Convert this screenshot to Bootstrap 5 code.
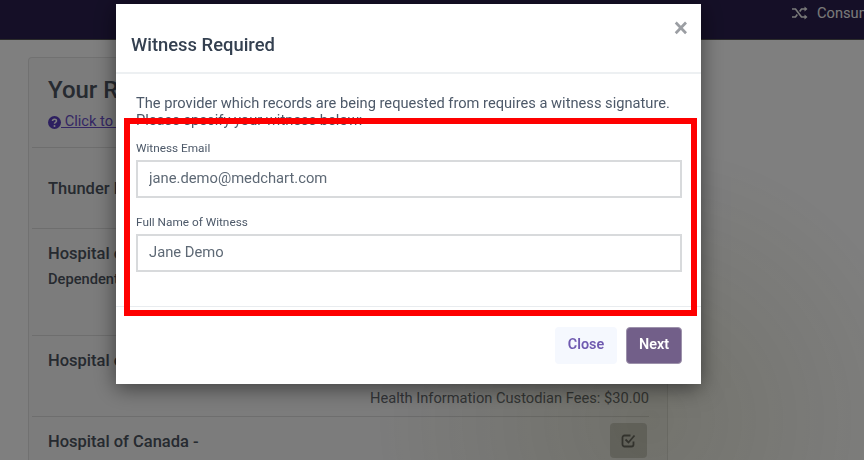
<!DOCTYPE html>
<html lang="en">
<head>
<meta charset="utf-8">
<title>Witness Required</title>
<link href="https://cdn.jsdelivr.net/npm/bootstrap@5.3.0/dist/css/bootstrap.min.css" rel="stylesheet">
<style>
html,body{height:460px;overflow:hidden}
body{font-family:Roboto,"Liberation Sans",sans-serif;background:#fff;color:#344050}
.topbar{height:40px;background:#2a1f4e;border-bottom:1px solid #555;color:#f4f4f4;font-size:14.67px;justify-content:flex-end;padding-bottom:13px}
.topbar-item{width:72px;white-space:nowrap;overflow:hidden;flex:none;gap:9px}
.topbar-item svg{flex:none}
.page-wrap{padding:17px 196px 0 28px;height:420px;overflow:hidden}
.rec-card{border:1px solid #e3e3e3;border-bottom:0;border-radius:4px 4px 0 0;padding:0 18px 0 3px;height:403px;background:#f8f8f8}
.rec-head{padding:18px 16px 0;height:90px;border-bottom:1px solid #dcdcdc;color:#4c5460}
.rec-head h2{font-size:24px;font-weight:500;margin:0 0 5px;line-height:28px}
.help-link{font-size:14.67px;color:#6a4fc8}
.rec-row{padding:0 16px;border-bottom:1px solid #dcdcdc;font-weight:500;font-size:16.5px;position:relative;color:#4c5460}
.r1{height:81px;padding-top:31px;line-height:20px}
.r2{height:107px;padding-top:13px}
.r2 div+div{font-size:14.67px;margin-top:1px}
.r3{height:81px;padding-top:13px}
.r4{padding-top:13px;border:0;height:50px}
.fee{font-weight:400;font-size:14.67px;text-align:right;margin-top:13px;margin-right:-16px;color:#666a70}
.chk-btn{position:absolute;right:2px;top:6px;width:37px;height:35px;background:#d0d0cc;border-radius:4px;display:flex;align-items:center;justify-content:center}
.modal-backdrop.show{opacity:.5;background:#000}
.glow{position:fixed;inset:0;z-index:1040;background:radial-gradient(circle at 650px 420px,rgba(110,110,30,.16),rgba(110,110,30,0) 280px);pointer-events:none}
.wit-dialog{max-width:585px;width:585px;margin:4px 0 0 116px}
.wit-content{border:0;border-radius:0;box-shadow:0 4px 20px rgba(0,0,0,.5);height:380px;color:#344050}
.wit-header{height:70px;padding:0 15px;border-bottom:2px solid #edf0f2;border-radius:0}
.wit-title{font-size:18.4px;font-weight:500;line-height:1.2;color:#344050;margin-top:15px}
.wit-x{color:#9b9ea3;font-size:27px;line-height:1;background:none;border:0;padding:0;margin:-19px -2px 0 0;font-weight:500}
.wit-body{padding:21px 19px 0 20px;height:233px;border-bottom:1px solid #e9ecef;flex:none}
.wit-body p{font-size:14.67px;line-height:17px;margin:0 0 12px;color:#4d5969}
.wit-label{font-size:11.8px;line-height:14px;margin:0 0 5px;display:block;color:#4d5969}
.wit-input{border:2px solid #d8dadc;border-radius:0;height:38px;padding:0 11px 2px;font-size:14.75px;color:#5e6975;margin-bottom:17px}
.wit-footer{border:0;padding:20px 19px 0 0;gap:9px;justify-content:flex-end}
.btn-close2,.btn-next{font-size:14.4px;font-weight:600;height:37px;border-radius:4px;padding:0 0 2px;margin:0}
.btn-close2{width:62px;background:#f5f8fe;color:#6f5ab0;border:0}
.btn-next{width:56px;background:#725f89;color:#fff;border:1px solid #9d92ab}
.red-frame{position:fixed;left:124px;top:118px;width:573px;height:198px;border:6px solid #fe0000;z-index:1060;pointer-events:none}
</style>
</head>
<body>
<nav class="topbar d-flex align-items-center">
  <div class="topbar-item d-flex align-items-center">
    <svg width="16" height="14" viewBox="0 0 16 14" fill="none" stroke="#f4f4f4" stroke-width="1.7"><path d="M0 3h3.500l6 8H13M0 11h3.500l1.800-2.400M7.700 5.400 9.500 3H13"/><path d="M12.500 .5 15.500 3l-3 2.500zM12.500 8.500 15.500 11l-3 2.500z" fill="#f4f4f4" stroke="none"/></svg>
    <span>Consumer</span>
  </div>
</nav>
<main class="page-wrap">
  <section class="rec-card">
    <div class="rec-head">
      <h2>Your Records</h2>
      <a href="#" class="help-link"><svg width="13" height="13" viewBox="0 0 13 13"><circle cx="6.500" cy="6.500" r="6.500" fill="#5a3fc0"/><path d="M4.500 5c.1-2.400 4-2.400 4 0 0 1.500-2 1.300-2 2.700" fill="none" stroke="#fff" stroke-width="1.500"/><circle cx="6.500" cy="10" r="1" fill="#fff"/></svg> Click to view instructions</a>
    </div>
    <div class="rec-row r1">Thunder Bay Clinic</div>
    <div class="rec-row r2"><div>Hospital of Canada</div><div>Dependent</div></div>
    <div class="rec-row r3"><div>Hospital of Canada</div><div class="fee">Health Information Custodian Fees: $30.00</div></div>
    <div class="rec-row r4">Hospital of Canada -
      <span class="chk-btn"><svg width="15" height="15" viewBox="0 0 15 15" fill="none" stroke="#666" stroke-width="1.800"><path d="M12.500 8.500v3a2 2 0 0 1-2 2h-7a2 2 0 0 1-2-2v-7a2 2 0 0 1 2-2h6"/><path d="M4.500 6.500l3 3 6-7"/></svg></span>
    </div>
  </section>
</main>
<div class="modal-backdrop show"></div>
<div class="glow"></div>
<div class="modal d-block" tabindex="-1">
  <div class="modal-dialog wit-dialog">
    <div class="modal-content wit-content">
      <div class="modal-header wit-header">
        <h5 class="modal-title wit-title">Witness Required</h5>
        <button type="button" class="wit-x" aria-label="Close">×</button>
      </div>
      <div class="modal-body wit-body">
        <p>The provider which records are being requested from requires a witness signature. Please specify your witness below:</p>
        <label class="wit-label" for="we">Witness Email</label>
        <input id="we" class="form-control wit-input" value="jane.demo@medchart.com">
        <label class="wit-label" for="wn">Full Name of Witness</label>
        <input id="wn" class="form-control wit-input" value="Jane Demo">
      </div>
      <div class="modal-footer wit-footer">
        <button type="button" class="btn btn-close2">Close</button>
        <button type="button" class="btn btn-next">Next</button>
      </div>
    </div>
  </div>
</div>
<div class="red-frame"></div>
<script src="https://cdn.jsdelivr.net/npm/bootstrap@5.3.0/dist/js/bootstrap.bundle.min.js"></script>
</body>
</html>
